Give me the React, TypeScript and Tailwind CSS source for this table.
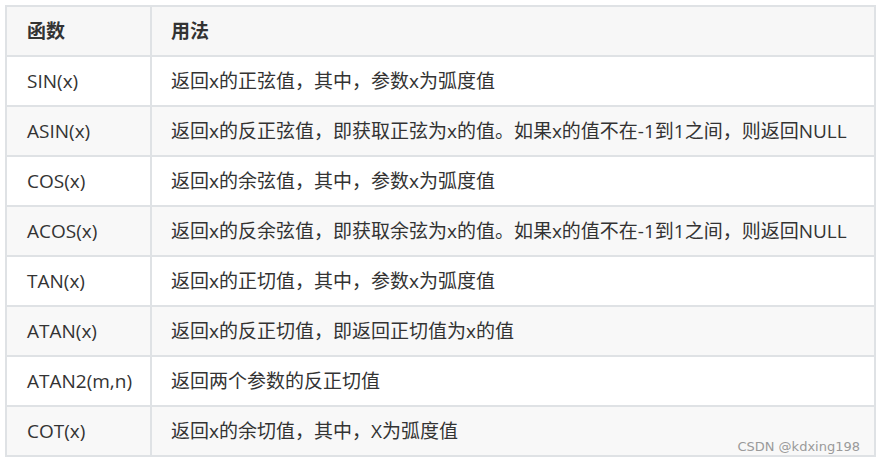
const rows = [
  { fn: "SIN(x)", use: "返回x的正弦值，其中，参数x为弧度值" },
  { fn: "ASIN(x)", use: "返回x的反正弦值，即获取正弦为x的值。如果x的值不在-1到1之间，则返回NULL" },
  { fn: "COS(x)", use: "返回x的余弦值，其中，参数x为弧度值" },
  { fn: "ACOS(x)", use: "返回x的反余弦值，即获取余弦为x的值。如果x的值不在-1到1之间，则返回NULL" },
  { fn: "TAN(x)", use: "返回x的正切值，其中，参数x为弧度值" },
  { fn: "ATAN(x)", use: "返回x的反正切值，即返回正切值为x的值" },
  { fn: "ATAN2(m,n)", use: "返回两个参数的反正切值" },
  { fn: "COT(x)", use: "返回x的余切值，其中，X为弧度值" },
];

export default function App() {
  return (
    <div className="relative w-[877px] h-[462px] bg-white pt-[5px] pl-[5px] font-['Open_Sans','Noto_Sans_CJK_SC',sans-serif] text-[19px] text-[#333]">
      <div className="grid grid-cols-[143px_722px] gap-[2px] p-[2px] w-[871px] bg-[#dfe2e5]">
        <div className="h-[48px] flex items-center pl-[20px] bg-[#f7f7f7] font-bold">函数</div>
        <div className="h-[48px] flex items-center pl-[19px] bg-[#f7f7f7] font-bold">用法</div>
        {rows.map((r, i) => (
          <div key={r.fn} className="contents">
            <div className={(i % 2 ? "bg-[#f8f8f8]" : "bg-white") + " h-[48px] flex items-center pl-[20px]"}>
              {r.fn}
            </div>
            <div className={(i % 2 ? "bg-[#f8f8f8]" : "bg-white") + " h-[48px] flex items-center pl-[19px] whitespace-nowrap"}>
              {r.use}
            </div>
          </div>
        ))}
      </div>
      <div className="absolute right-[17px] top-[437px] text-[13px] text-[#9a9a9a] font-['DejaVu_Sans',sans-serif]">
        CSDN @kdxing198
      </div>
    </div>
  );
}
